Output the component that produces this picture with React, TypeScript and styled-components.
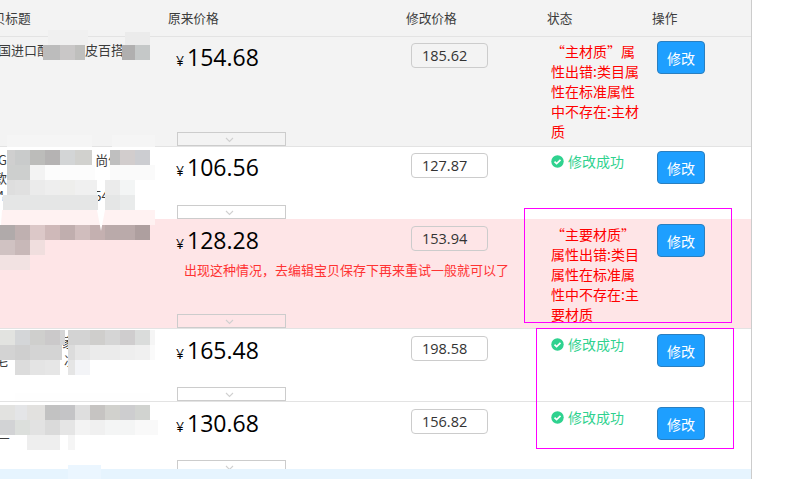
import React from "react";
import styled, { createGlobalStyle } from "styled-components";

const Global = createGlobalStyle`
  html, body { margin: 0; padding: 0; background: #fff; overflow: hidden; height: 100%; }
  body { font-family: "Noto Sans CJK SC", "Liberation Sans", sans-serif; }
  #root { height: 100%; }
`;

const Page = styled.div`
  position: relative;
  width: 798px;
  height: 479px;
  overflow: hidden;
`;

const Table = styled.div`
  width: 751px;
  height: 479px;
  border-right: 1px solid #ccc;
  overflow: hidden;
`;

const columns = "168px 238px 141px 105px 99px";

const Head = styled.div`
  display: grid;
  grid-template-columns: ${columns};
  height: 34px;
  padding-bottom: 2px;
  align-items: center;
  background: #f3f3f3;
  border-bottom: 1px solid #e3e3e3;
  font-size: 12.7px;
  color: #3c3c3c;
`;

const HeadTitle = styled.div`
  margin-left: -20px;
  white-space: nowrap;
`;

const Row = styled.div<{ $height: number; $inner: number; $bg: string; $line?: boolean }>`
  display: grid;
  grid-template-columns: ${columns};
  grid-template-rows: ${(p) => p.$inner}px;
  height: ${(p) => p.$height}px;
  box-sizing: border-box;
  background: ${(p) => p.$bg};
  border-bottom: ${(p) => (p.$line ? "1px solid #e3e3e3" : "0")};
  overflow: hidden;
`;

const TitleCell = styled.div`
  padding-top: 4px;
  font-size: 13px;
  line-height: 18px;
  color: #3c3c3c;
  overflow: hidden;
`;

const TitleLine = styled.div`
  display: flex;
  height: 18px;
  white-space: nowrap;
`;

const Frag = styled.span<{ $left: number }>`
  margin-left: ${(p) => p.$left}px;
`;

const PriceCell = styled.div`
  display: flex;
  flex-direction: column;
  padding-left: 9px;
  min-width: 0;
`;

const Price = styled.div<{ $top: number }>`
  display: flex;
  align-items: baseline;
  height: 34px;
  padding-top: ${(p) => p.$top - 1}px;
  margin-bottom: ${(p) => 5 - p.$top}px;
  margin-left: -1px;
  color: #000;
  line-height: 34px;
  font-family: "Open Sans", "Liberation Sans", sans-serif;
  font-size: 23px;
`;

const Yen = styled.span`
  font-size: 14px;
  margin-right: 3px;
`;

const Note = styled.div`
  margin: 3px 0 0 -2px;
  padding-left: 9px;
  font-size: 13px;
  line-height: 20px;
  color: #f33;
  white-space: nowrap;
`;

const Expand = styled.div`
  margin-top: auto;
  width: 109px;
  height: 14px;
  box-sizing: border-box;
  border: 1px solid #ccc;
  padding: 1px 4px 0 0;
  display: flex;
  align-items: center;
  justify-content: center;
`;

const InputCell = styled.div<{ $top: number }>`
  padding: ${(p) => p.$top + 2}px 0 0 5px;
`;

const PriceInput = styled.div`
  width: 77px;
  height: 25px;
  box-sizing: border-box;
  border: 1px solid #ccc;
  border-radius: 4px;
  padding-left: 10px;
  font-family: "Open Sans", "Liberation Sans", sans-serif;
  font-size: 14.5px;
  line-height: 24px;
  color: #333;
`;

const StatusCell = styled.div<{ $top: number }>`
  padding: ${(p) => p.$top}px 0 0 4px;
`;

const ErrorText = styled.div`
  font-size: 14px;
  line-height: 20px;
  color: #f00;
  white-space: nowrap;
`;

const Success = styled.div`
  display: flex;
  align-items: center;
  gap: 4px;
  font-size: 14px;
  line-height: 20px;
  color: #2fd28f;
`;

const ActionCell = styled.div<{ $top: number }>`
  padding: ${(p) => p.$top}px 0 0 5px;
`;

const EditButton = styled.button`
  display: block;
  width: 48px;
  height: 33px;
  padding: 0;
  box-sizing: border-box;
  border: 1px solid #2a7fc0;
  border-radius: 4px;
  background: #1e9fff;
  color: #fff;
  font-family: inherit;
  font-size: 14px;
`;

const BlueRow = styled.div`
  height: 10px;
  background: #e6f4fe;
`;

const Mosaic = styled.svg`
  position: absolute;
  left: 0;
  top: 0;
  pointer-events: none;
`;

const Annotation = styled.div<{ $x: number; $y: number; $w: number; $h: number }>`
  position: absolute;
  left: ${(p) => p.$x}px;
  top: ${(p) => p.$y}px;
  width: ${(p) => p.$w}px;
  height: ${(p) => p.$h}px;
  box-sizing: border-box;
  border: 1px solid #ff00ff;
  pointer-events: none;
`;

const Chevron = () => (
  <svg width="9" height="6" viewBox="0 0 9 6" fill="none">
    <path d="M1 1 L4.5 4.5 L8 1" stroke="#d0d0d0" strokeWidth="1.1" />
  </svg>
);

const CheckIcon = () => (
  <svg width="13" height="13" viewBox="0 0 13 13">
    <circle cx="6.5" cy="6.5" r="6.2" fill="#2fd28f" />
    <path d="M3.5 6.6 L5.6 8.6 L9.5 4.8" fill="none" stroke="#fff" strokeWidth="1.7" />
  </svg>
);

type Cell = [number, number, number, number, string];

const band = (y: number, h: number, cells: [number, number, string][]): Cell[] =>
  cells.map(([a, b, c]) => [a, y, b - a, h, c]);

const mosaicCells: Cell[] = [
  [48, 30, 40, 15, "#f0f0f0"],
  [125, 32, 25, 13, "#ebebeb"],
  ...band(45, 15, [
    [43, 60, "#bcbcbc"],
    [60, 75, "#c9c7c7"],
    [75, 85, "#bfbfbd"],
    [122, 135, "#b0afaf"],
    [135, 150, "#c5c8c8"],
  ]),
  [7, 135, 85, 12, "#f5f5f5"],
  [112, 135, 43, 12, "#f5f5f5"],
  ...band(150, 15, [
    [7, 15, "#cfcfcf"],
    [15, 30, "#c9cbcb"],
    [30, 45, "#bcbcba"],
    [45, 60, "#b5b3b3"],
    [60, 75, "#d3d5d6"],
    [75, 92, "#d1d1ce"],
    [110, 120, "#bfbfbf"],
    [120, 135, "#d2cdcd"],
    [135, 150, "#cccdd1"],
  ]),
  ...band(165, 15, [
    [7, 30, "#cdcfce"],
    [30, 45, "#f3f3f3"],
    [45, 95, "#fcfcfc"],
    [110, 155, "#fafafa"],
  ]),
  ...band(180, 15, [
    [7, 15, "#dedede"],
    [15, 30, "#e0e0e0"],
    [30, 45, "#ebebeb"],
    [45, 60, "#eeeeee"],
    [60, 75, "#eeeeec"],
    [75, 97, "#f0f0f0"],
    [105, 120, "#ebebeb"],
    [120, 135, "#f3f5f5"],
  ]),
  ...band(195, 15, [
    [3, 98, "#e5e6e6"],
    [105, 120, "#e5e6e6"],
    [120, 135, "#e9ebeb"],
  ]),
  [1, 210, 154, 15, "#fff2f2"],
  ...band(225, 15, [
    [0, 15, "#b0aaaa"],
    [15, 30, "#bfb0b0"],
    [30, 45, "#dcc8c8"],
    [45, 60, "#cfb9b9"],
    [60, 75, "#c0aeae"],
    [75, 90, "#d0bdbd"],
    [90, 105, "#c4b0b0"],
    [105, 135, "#baaaaa"],
    [135, 150, "#ae9f9f"],
  ]),
  ...band(240, 15, [
    [0, 15, "#d0c2c2"],
    [15, 30, "#c8b8b8"],
    [30, 45, "#f0dede"],
  ]),
  [0, 255, 30, 15, "#f2e2e2"],
  ...band(330, 15, [
    [0, 15, "#e2e3e0"],
    [15, 30, "#d4d6d8"],
    [30, 45, "#cfcfcd"],
    [45, 60, "#cbc9ca"],
    [60, 65, "#d5d5d6"],
    [68, 90, "#d3d3d3"],
    [90, 105, "#cfcecc"],
    [105, 120, "#d5d5d5"],
    [120, 135, "#cfcdce"],
    [135, 150, "#dadcdb"],
    [150, 155, "#f5f5f5"],
  ]),
  ...band(345, 15, [
    [0, 15, "#d3d3d3"],
    [15, 30, "#cfcfcf"],
    [30, 62, "#d4d4d4"],
    [68, 75, "#dcdcdc"],
    [75, 90, "#e6e6e6"],
    [90, 120, "#ebebeb"],
    [120, 135, "#eeeeee"],
    [135, 150, "#f0f0f0"],
    [150, 155, "#fafafa"],
  ]),
  ...band(360, 15, [
    [15, 30, "#dcdcdc"],
    [30, 45, "#e4e4e4"],
    [45, 60, "#e6e6e6"],
    [68, 75, "#e5e5e5"],
    [75, 90, "#f3f4f7"],
  ]),
  [15, 393, 135, 8, "#fefefe"],
  ...band(405, 15, [
    [0, 15, "#e2e2e0"],
    [15, 27, "#e4e5e7"],
    [27, 45, "#e2e1df"],
    [45, 60, "#c2c2c2"],
    [60, 75, "#c4c4c6"],
    [75, 90, "#dedede"],
    [90, 105, "#c6c4c2"],
    [105, 120, "#d1d1cd"],
    [120, 135, "#cdcdcf"],
    [135, 150, "#d1d3d0"],
  ]),
  ...band(420, 15, [
    [0, 15, "#d2d3d5"],
    [15, 30, "#dcdfdc"],
    [30, 45, "#e2e2e2"],
    [45, 60, "#dadada"],
    [60, 75, "#e5e5e5"],
    [75, 90, "#f3f3f3"],
    [90, 105, "#f0f0f0"],
    [105, 135, "#f4f5f5"],
    [135, 158, "#f9f9f9"],
  ]),
  ...band(435, 15, [
    [27, 60, "#eeeeee"],
    [68, 75, "#f5f5f5"],
  ]),
  [68, 465, 33, 14, "#ebf6ff"],
];

type Item = {
  height: number;
  inner: number;
  bg: string;
  line: boolean;
  price: string;
  edit: string;
  top: number;
  lines: { left: number; text: string }[][];
  note?: string;
  error?: string[];
};

const items: Item[] = [
  {
    height: 110,
    inner: 109,
    bg: "#f3f3f3",
    line: true,
    price: "154.68",
    edit: "185.62",
    top: 4,
    lines: [[{ left: -2, text: "国进口配" }, { left: 35, text: "皮百搭" }]],
    error: ["“主材质”属", "性出错:类目属", "性在标准属性", "中不存在:主材", "质"],
  },
  {
    height: 72,
    inner: 72,
    bg: "#fff",
    line: false,
    price: "106.56",
    edit: "127.87",
    top: 4,
    lines: [
      [{ left: -2, text: "GC" }, { left: 80, text: "尚僧" }],
      [{ left: -6, text: "款" }],
      [{ left: -3, text: "4" }, { left: 90, text: "54" }],
    ],
  },
  {
    height: 110,
    inner: 109,
    bg: "#fee5e7",
    line: true,
    price: "128.28",
    edit: "153.94",
    top: 5,
    lines: [],
    note: "出现这种情况，去编辑宝贝保存下再来重试一般就可以了",
    error: ["“主要材质”", "属性出错:类目", "属性在标准属", "性中不存在:主", "要材质"],
  },
  {
    height: 73,
    inner: 72,
    bg: "#fff",
    line: true,
    price: "165.48",
    edit: "198.58",
    top: 5,
    lines: [
      [{ left: 62, text: "家" }],
      [{ left: -5, text: "毛" }, { left: 56, text: "况" }],
    ],
  },
  {
    height: 67,
    inner: 72,
    bg: "#fff",
    line: false,
    price: "130.68",
    edit: "156.82",
    top: 5,
    lines: [[], [{ left: -3, text: "三" }]],
  },
];

export default function App() {
  return (
    <Page>
      <Global />
      <Table>
        <Head>
          <HeadTitle>宝贝标题</HeadTitle>
          <div>原来价格</div>
          <div>修改价格</div>
          <div>状态</div>
          <div>操作</div>
        </Head>
        {items.map((it) => (
          <Row key={it.price} $height={it.height} $inner={it.inner} $bg={it.bg} $line={it.line}>
            <TitleCell>
              {it.lines.map((l, i) => (
                <TitleLine key={i}>
                  {l.map((f) => (
                    <Frag key={f.text} $left={f.left}>
                      {f.text}
                    </Frag>
                  ))}
                </TitleLine>
              ))}
            </TitleCell>
            <PriceCell>
              <Price $top={it.top}>
                <Yen>¥</Yen>
                {it.price}
              </Price>
              {it.note && <Note>{it.note}</Note>}
              <Expand>
                <Chevron />
              </Expand>
            </PriceCell>
            <InputCell $top={it.top}>
              <PriceInput>{it.edit}</PriceInput>
            </InputCell>
            <StatusCell $top={it.top}>
              {it.error ? (
                <ErrorText>
                  {it.error.map((t) => (
                    <div key={t}>{t}</div>
                  ))}
                </ErrorText>
              ) : (
                <Success>
                  <CheckIcon />
                  修改成功
                </Success>
              )}
            </StatusCell>
            <ActionCell $top={it.top}>
              <EditButton>修改</EditButton>
            </ActionCell>
          </Row>
        ))}
        <BlueRow />
      </Table>
      <Mosaic width="160" height="479" viewBox="0 0 160 479">
        {mosaicCells.map(([x, y, w, h, c], i) => (
          <rect key={i} x={x} y={y} width={w} height={h} fill={c} />
        ))}
        <polygon points="97,210 105,210 101,231" fill="#ffffff" />
        <polygon points="0,195 3,195 1,225 0,225" fill="#ffffff" />
      </Mosaic>
      <Annotation $x={524} $y={208} $w={208} $h={115} />
      <Annotation $x={536} $y={328} $w={198} $h={121} />
    </Page>
  );
}
